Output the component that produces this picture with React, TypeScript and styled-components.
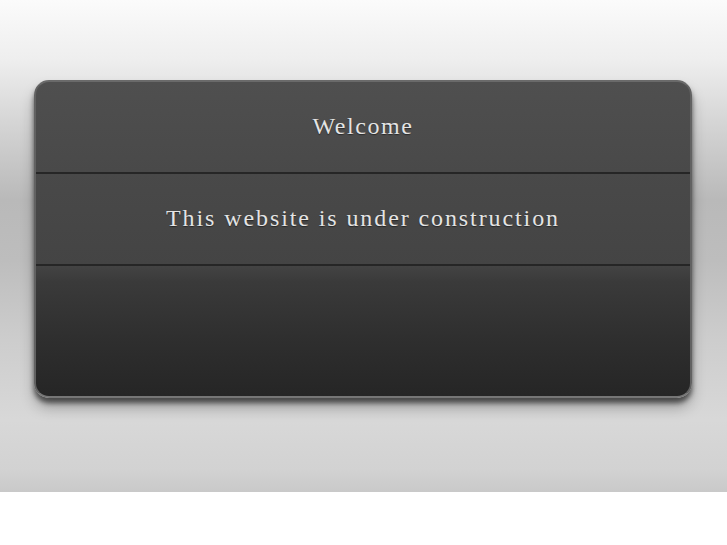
import styled, { createGlobalStyle } from 'styled-components'

const GlobalStyle = createGlobalStyle`
    html, body {
        margin: 0;
        padding: 0;
        background: #ffffff;
    }
    body {
        font-family: "Liberation Serif", "Times New Roman", serif;
    }
`

export default function App() {
    return (
        <>
            <GlobalStyle />
            <Stage>
                <Panel>
                    <Row>
                        <Heading>Welcome</Heading>
                    </Row>
                    <Row>
                        <Message>This website is under construction</Message>
                    </Row>
                    <Footer />
                </Panel>
            </Stage>
        </>
    )
}

const Stage = styled.div`
    height: 492px;
    box-sizing: border-box;
    padding: 80px 35px 0 34px;
    background: linear-gradient(
        to bottom,
        #fbfbfb 0px,
        #eeeeee 60px,
        #d6d6d6 120px,
        #b9b9b9 200px,
        #bdbdbd 260px,
        #cdcdcd 340px,
        #d8d8d8 420px,
        #d2d2d2 470px,
        #c9c9c9 492px
    );
`

const Panel = styled.div`
    display: flex;
    flex-direction: column;
    height: 318px;
    box-sizing: border-box;
    border: 2px solid #626262;
    border-top-color: #6a6a6a;
    border-bottom-color: #767676;
    border-radius: 15px;
    overflow: hidden;
    background: linear-gradient(
        to bottom,
        #4f4f4f 0px,
        #494949 90px,
        #444444 183px,
        #3a3a3a 200px,
        #2e2e2e 260px,
        #252525 318px
    );
    box-shadow:
        0 5px 5px rgba(0, 0, 0, 0.55),
        0 10px 14px rgba(0, 0, 0, 0.25);
`

const Row = styled.div`
    display: flex;
    align-items: center;
    justify-content: center;
    height: 92px;
    box-sizing: border-box;
    border-bottom: 2px solid #262626;
    padding-bottom: 2px;
`

const Heading = styled.h1`
    margin: 0;
    font-size: 24px;
    font-weight: normal;
    letter-spacing: 1.6px;
    color: #e4e4e4;
    text-shadow: 0 1px 1px rgba(0, 0, 0, 0.45);
`

const Message = styled.p`
    margin: 0;
    font-size: 24px;
    letter-spacing: 1.9px;
    color: #e4e4e4;
    text-shadow: 0 1px 1px rgba(0, 0, 0, 0.45);
`

const Footer = styled.div`
    flex: 1;
`
